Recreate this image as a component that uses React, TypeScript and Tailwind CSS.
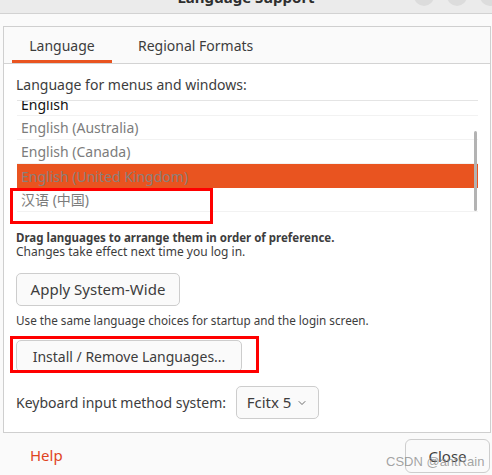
import { ChevronDown } from "lucide-react"

type Row = { label: string; tone: "dark" | "muted" | "selected" }

const rows: Row[] = [
  { label: "English", tone: "dark" },
  { label: "English (Australia)", tone: "muted" },
  { label: "English (Canada)", tone: "muted" },
  { label: "English (United Kingdom)", tone: "selected" },
  { label: "汉语 (中国)", tone: "muted" },
]

const LanguageList = () => {
  return (
    <div className="relative ml-[13px] mt-[4px] h-[114px] w-[461px] overflow-hidden border-t border-[#e4e4e4] bg-white">
      <div className="-mt-[9px] flex flex-col">
        {rows.map((row) => (
          <div
            key={row.label}
            className={
              row.tone === "selected"
                ? "flex h-[24px] items-center bg-[#e95420] pl-[4px] text-[#8c7f7a]"
                : row.tone === "dark"
                ? "flex h-[24px] items-center border-b border-[#f2f2f2] pl-[4px] pt-[1px] text-[#111]"
                : "flex h-[24px] items-center border-b border-[#f2f2f2] pl-[4px] text-[#7c7c7c]"
            }
          >
            {row.label}
          </div>
        ))}
      </div>
      <div className="absolute right-[1px] top-[30px] h-[80px] w-[3px] rounded-full bg-[#b3b3b3]" />
    </div>
  )
}

export default function App() {
  return (
    <div
      className="relative h-[475px] w-[492px] overflow-hidden bg-[#fafafa] text-[14px] text-[#3d3d3d]"
      style={{ fontFamily: '"Noto Sans", "Noto Sans CJK SC", sans-serif' }}
    >
      {/* title bar, cut off at the top */}
      <div className="relative h-[14px] overflow-hidden border-b border-[#d2d2d2] bg-[#ebebeb]">
        <div className="-mt-[13px] text-center text-[15px] font-bold leading-[20px] text-[#2e2e2e]">
          Language Support
        </div>
        <div className="absolute -top-[14px] right-[-8px] flex gap-[13px]">
          <span className="h-[20px] w-[20px] rounded-full bg-[#dcdcdc]" />
          <span className="h-[20px] w-[20px] rounded-full bg-[#dcdcdc]" />
          <span className="h-[20px] w-[20px] rounded-full bg-[#dcdcdc]" />
        </div>
      </div>

      {/* notebook */}
      <div className="ml-[3px] mt-[12px] flex h-[407px] w-[488px] flex-col border border-[#cfcfcf] bg-white">
        <div className="flex h-[37px] border-b border-[#d3d3d3] bg-[#fafafa] pl-[8px]">
          <div className="flex w-[100px] items-center justify-center border-b-[3px] border-[#e95420] pt-[3px]">
            Language
          </div>
          <div className="flex items-center pl-[26px]">Regional Formats</div>
        </div>

        <div className="ml-[12px] mt-[10px] leading-[22px]">Language for menus and windows:</div>

        <LanguageList />

        <div className="ml-[12px] mt-[17px] text-[11.5px] font-bold leading-[14px]">
          Drag languages to arrange them in order of preference.
        </div>
        <div className="ml-[12px] text-[12px] leading-[14px]">Changes take effect next time you log in.</div>

        <button className="ml-[12px] mt-[14px] flex h-[33px] w-[164px] items-center justify-center rounded-[5px] border border-[#cdcdcd] bg-[#fafafa] text-[15px]">
          Apply System-Wide
        </button>

        <div className="ml-[12px] mt-[7px] text-[11.7px] leading-[14px]">
          Use the same language choices for startup and the login screen.
        </div>

        <button className="ml-[12px] mt-[13px] flex h-[32px] w-[226px] items-center justify-center rounded-[5px] border border-[#cdcdcd] bg-[#fafafa] text-[14px]">
          Install / Remove Languages...
        </button>

        <div className="ml-[12px] mt-[14px] flex items-center gap-[10px]">
          <span className="text-[14px]">Keyboard input method system:</span>
          <button className="flex h-[33px] w-[83px] items-center justify-center gap-[5px] rounded-[5px] border border-[#cdcdcd] bg-[#fafafa] text-[15px]">
            Fcitx 5
            <ChevronDown size={12} strokeWidth={1.5} />
          </button>
        </div>
      </div>

      {/* footer */}
      <div className="flex items-start justify-between">
        <span className="ml-[30px] mt-[11px] text-[15px] text-[#e0441f]">Help</span>
        <button className="mr-[2px] mt-[6px] flex h-[34px] w-[85px] items-center justify-center rounded-[6px] border border-[#cdcdcd] bg-[#fafafa] text-[15px]">
          Close
        </button>
      </div>

      {/* annotation overlays */}
      <div className="absolute left-[10px] top-[188px] h-[36px] w-[203px] border-[3px] border-[#ff0000]" />
      <div className="absolute left-[10px] top-[336px] h-[37px] w-[249px] border-[3px] border-[#ff0000]" />
      <div
        className="absolute left-[386px] top-[452px] text-[13px] text-[#8c8c8c]/80"
        style={{ fontFamily: '"Liberation Sans", sans-serif' }}
      >
        CSDN @antRain
      </div>
    </div>
  )
}
